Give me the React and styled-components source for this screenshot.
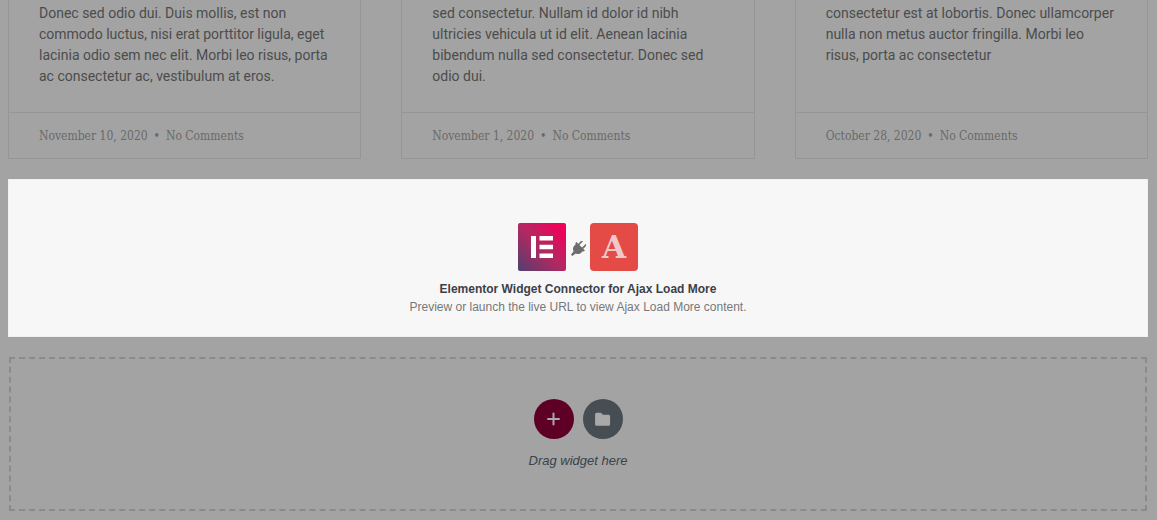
import React from 'react';
import { createGlobalStyle, styled } from 'styled-components';

const posts = [
  {
    excerpt:
      'Donec sed odio dui. Duis mollis, est non commodo luctus, nisi erat porttitor ligula, eget lacinia odio sem nec elit. Morbi leo risus, porta ac consectetur ac, vestibulum at eros.',
    date: 'November 10, 2020',
  },
  {
    excerpt:
      'sed consectetur. Nullam id dolor id nibh ultricies vehicula ut id elit. Aenean lacinia bibendum nulla sed consectetur. Donec sed odio dui.',
    date: 'November 1, 2020',
  },
  {
    excerpt:
      'consectetur est at lobortis. Donec ullamcorper nulla non metus auctor fringilla. Morbi leo risus, porta ac consectetur',
    date: 'October 28, 2020',
  },
];

const ElementorLogo = () => (
  <Logo viewBox="0 0 48 48" aria-hidden="true">
    <defs>
      <linearGradient id="elementor" x1="0" y1="1" x2="1" y2="0">
        <stop offset="0" stopColor="#4b4270" />
        <stop offset="0.2" stopColor="#7a3568" />
        <stop offset="0.5" stopColor="#b42862" />
        <stop offset="0.85" stopColor="#ea045a" />
        <stop offset="1" stopColor="#f5005a" />
      </linearGradient>
    </defs>
    <rect width="48" height="48" rx="2" fill="url(#elementor)" />
    <path
      fill="#fff"
      d="M13 13h5v22h-5zM21.500 13h13.500v4.500h-13.500zM21.500 21.700h13.500v4.500h-13.500zM21.500 30.500h13.500v4.500h-13.500z"
    />
  </Logo>
);

const PlugIcon = () => (
  <Plug viewBox="0 0 16 16" aria-hidden="true">
    <g
      transform="rotate(45 8 8)"
      fill="none"
      stroke="#6d6d6d"
      strokeLinecap="round"
    >
      <path
        fill="#6d6d6d"
        stroke="none"
        d="M2 4.200h12v1.800h-1v2a5 5 0 0 1-3.500 4.700l-.5 4.300h-2l-.5-4.300a5 5 0 0 1-3.500-4.700v-2h-1z"
      />
      <path d="M5.300 4V-.6M10.700 4V-.6" strokeWidth="1.700" />
    </g>
  </Plug>
);

const PlusIcon = () => (
  <svg width="14" height="14" viewBox="0 0 14 14" aria-hidden="true">
    <path
      d="M6.500 1.500v11M1 7h11"
      stroke="currentColor"
      strokeWidth="2"
      strokeLinecap="round"
    />
  </svg>
);

const FolderIcon = () => (
  <svg width="16" height="14" viewBox="0 0 16 14" aria-hidden="true">
    <path
      fill="currentColor"
      d="M1.700 .8h4.200l2 2h5.600a1.600 1.600 0 0 1 1.600 1.600v7.800a1.600 1.600 0 0 1-1.600 1.600H1.700A1.600 1.600 0 0 1 .1 12.200V2.400A1.600 1.600 0 0 1 1.700 .8z"
    />
  </svg>
);

export default function App() {
  return (
    <Page>
      <GlobalStyle />
      <PostGrid>
        {posts.map((post) => (
          <Card key={post.date}>
            <Excerpt>{post.excerpt}</Excerpt>
            <Meta>
              <time>{post.date}</time>
              <span>•</span>
              <span>No Comments</span>
            </Meta>
          </Card>
        ))}
      </PostGrid>

      <Connector>
        <LogoRow>
          <ElementorLogo />
          <PlugIcon />
          <AjaxLogo>A</AjaxLogo>
        </LogoRow>
        <Title>Elementor Widget Connector for Ajax Load More</Title>
        <Text>Preview or launch the live URL to view Ajax Load More content.</Text>
      </Connector>

      <DropZone>
        <ButtonRow>
          <RoundButton type="button" $color="#5e0026" aria-label="Add section">
            <PlusIcon />
          </RoundButton>
          <RoundButton type="button" $color="#464d53" aria-label="Add template">
            <FolderIcon />
          </RoundButton>
        </ButtonRow>
        <DropText>Drag widget here</DropText>
      </DropZone>
    </Page>
  );
}

const GlobalStyle = createGlobalStyle`
  * {
    box-sizing: border-box;
  }

  body {
    margin: 0;
    background-color: #a3a3a3;
    font-family: 'Liberation Sans', Arial, sans-serif;
  }
`;

const Page = styled.main`
  padding: 0 9px 9px 8px;
`;

// posts
const PostGrid = styled.section`
  display: grid;
  grid-template-columns: repeat(3, 1fr);
  gap: 40px;
`;

const Card = styled.article`
  display: flex;
  flex-direction: column;
  border: 1px solid #969696;
  border-top: none;
`;

const Excerpt = styled.p`
  flex: 1;
  margin: 0;
  padding: 3px 30px 25px;
  color: #4c4c4c;
  font-family: Roboto, sans-serif;
  font-size: 14px;
  line-height: 21px;
`;

const Meta = styled.footer`
  display: flex;
  gap: 6px;
  padding: 15px 30px 14px;
  border-top: 1px solid #969696;
  color: #696969;
  font-family: 'Roboto Slab', 'DejaVu Serif Condensed', 'DejaVu Serif', serif;
  font-size: 12px;
  line-height: 16px;
`;

// connector
const Connector = styled.section`
  margin: 20px 0;
  padding: 43px 20px 20px;
  border: 1px solid #f0f0f0;
  background-color: #f7f7f7;
  text-align: center;
`;

const LogoRow = styled.div`
  display: flex;
  align-items: center;
  justify-content: center;
  gap: 4px;
  margin-bottom: 9px;
`;

const Logo = styled.svg`
  width: 48px;
  height: 48px;
`;

const Plug = styled.svg`
  width: 16px;
  height: 16px;
  margin-top: 4px;
`;

const AjaxLogo = styled.span`
  width: 48px;
  height: 48px;
  border-radius: 4px;
  background-color: #e44a46;
  color: #f0c8ca;
  font-family: 'DejaVu Serif', serif;
  font-size: 31px;
  font-weight: 700;
  line-height: 48px;
`;

const Title = styled.h2`
  margin: 0;
  color: #3c4049;
  font-size: 12px;
  line-height: 18px;
`;

const Text = styled.p`
  margin: 0;
  color: #777;
  font-size: 12px;
  line-height: 18px;
`;

// drop zone
const DropZone = styled.section`
  margin: 0 1px;
  padding: 40px 20px 38px;
  border: 2px dashed #868b90;
  text-align: center;
`;

const ButtonRow = styled.div`
  display: flex;
  justify-content: center;
  gap: 9px;
`;

const RoundButton = styled.button`
  cursor: pointer;
  display: flex;
  align-items: center;
  justify-content: center;
  width: 40px;
  height: 40px;
  padding: 0;
  border: none;
  border-radius: 50%;
  background-color: ${({ $color }) => $color};
  color: #a9a9a9;
`;

const DropText = styled.p`
  margin: 12px 0 0;
  color: #3b424a;
  font-size: 13px;
  font-style: italic;
  line-height: 20px;
`;
